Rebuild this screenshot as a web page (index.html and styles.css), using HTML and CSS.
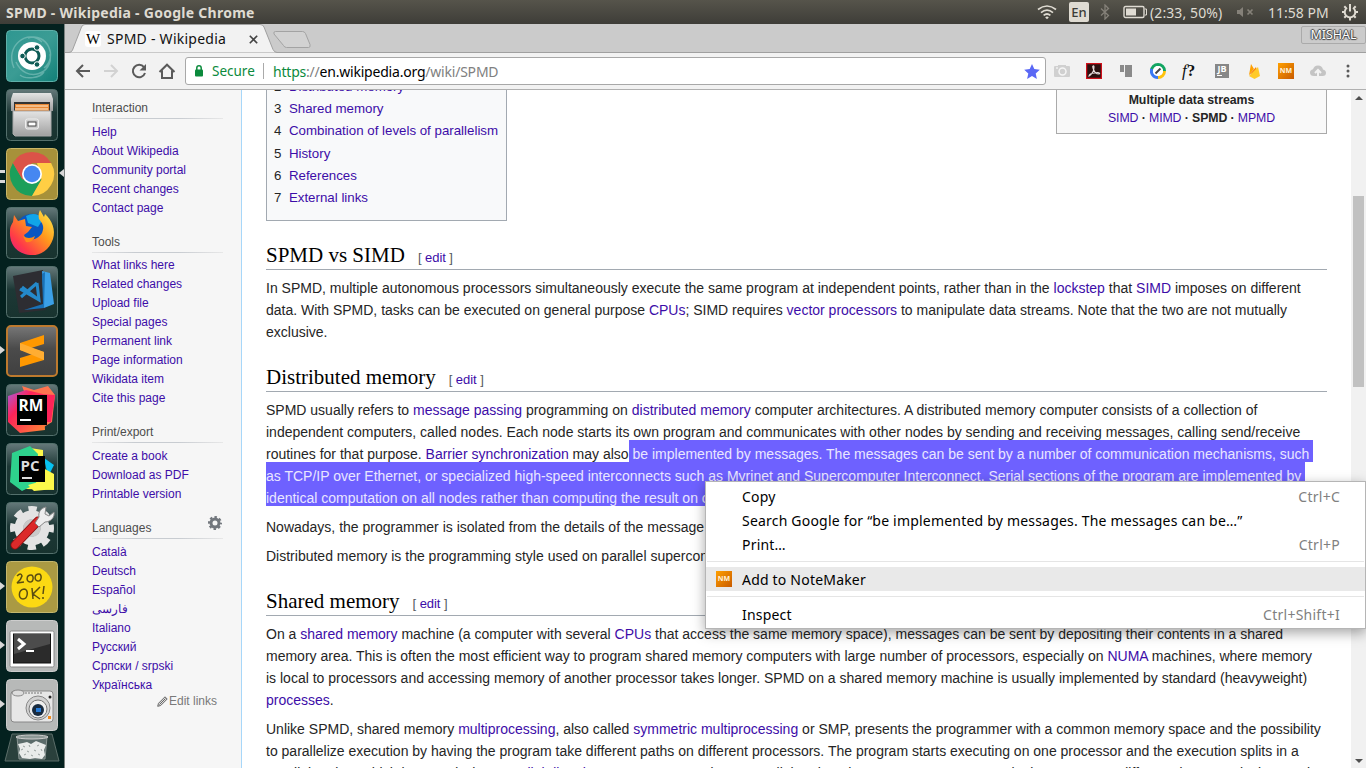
FILE: index.html
```html
<!DOCTYPE html>
<html lang="en">
<head>
<meta charset="utf-8">
<title>SPMD - Wikipedia</title>
<link rel="stylesheet" href="styles.css">
</head>
<body>
<svg width="0" height="0" class="defs">
  <defs>
    <linearGradient id="glass" x1="0" y1="0" x2="0" y2="1"><stop offset="0" stop-color="#65797a"/><stop offset=".45" stop-color="#1d3836"/><stop offset="1" stop-color="#18332f"/></linearGradient>
    <linearGradient id="silver" x1="0" y1="0" x2="0" y2="1"><stop offset="0" stop-color="#e4e4e4"/><stop offset="1" stop-color="#a0a0a0"/></linearGradient>
    <linearGradient id="teal" x1="0" y1="0" x2="1" y2="1"><stop offset="0" stop-color="#2f9791"/><stop offset=".5" stop-color="#3b9c94"/><stop offset="1" stop-color="#128078"/></linearGradient>
    <linearGradient id="fox" x1="1" y1="0" x2="0" y2="1"><stop offset="0" stop-color="#fff44f"/><stop offset=".4" stop-color="#ff9a1c"/><stop offset=".75" stop-color="#ff3b47"/><stop offset="1" stop-color="#e31587"/></linearGradient>
    <linearGradient id="dark" x1="0" y1="0" x2="0" y2="1"><stop offset="0" stop-color="#777"/><stop offset=".45" stop-color="#4b4b4b"/><stop offset="1" stop-color="#404040"/></linearGradient>
    <linearGradient id="rm" x1="0" y1="0" x2="1" y2="1"><stop offset="0" stop-color="#a55be0"/><stop offset=".35" stop-color="#ff2358"/><stop offset="1" stop-color="#ff8a35"/></linearGradient>
  </defs>
</svg>

<header class="panel">
  <span class="panel-title">SPMD - Wikipedia - Google Chrome</span>
  <div class="indicators">
    <svg class="wifi" width="20" height="16" viewBox="0 0 20 16" fill="none" stroke="#dfdbd2" stroke-width="1.7"><path d="M1 5.5Q10-1.5 19 5.5M4 8.6Q10 3.6 16 8.6M6.6 11.4Q10 8.6 13.4 11.4"/><path d="M8.2 13.4Q10 11.8 11.8 13.4L10 15.2z" fill="#dfdbd2" stroke="none"/></svg>
    <span class="lang">En</span>
    <svg class="bt" width="10" height="16" viewBox="0 0 10 16" fill="none" stroke="#858179" stroke-width="1.3"><path d="M1 4.5L8.5 11.5 5 15V1L8.5 4.5 1 11.5"/></svg>
    <svg class="battery" width="25" height="14" viewBox="0 0 25 14"><rect x="1" y="1.5" width="20" height="11" rx="1.5" fill="none" stroke="#dfdbd2" stroke-width="1.4"/><path d="M3 3.5h10v7H3z" fill="#dfdbd2"/><path d="M22 4h1.5v6H22" fill="none" stroke="#dfdbd2"/></svg>
    <span class="battery-text">(2:33, 50%)</span>
    <svg class="mute" width="18" height="12" viewBox="0 0 18 12"><path d="M1 4h2.5L7 1v10L3.500 8H1z" fill="#858179"/><path d="M11.500 3.500l5 5m0-5l-5 5" stroke="#858179" stroke-width="1.7"/></svg>
    <span class="clock">11:58 PM</span>
    <svg class="power" width="18" height="18" viewBox="0 0 18 18" fill="none" stroke="#dfdbd2"><path d="M6 4.800a5.300 5.300 0 1 0 6 0" stroke-width="2"/><path d="M9 1v7.500" stroke-width="2"/><path d="M1 9h2.500M14.500 9H17M3.300 14.700l1.700-1.700M13 13l1.700 1.700M9 15v2.500M3.300 3.300L5 5M13 5l1.700-1.700" stroke-width="2"/></svg>
  </div>
</header>

<div class="desktop">
  <nav class="launcher">
    <div class="app"><svg viewBox="0 0 52 52"><rect x=".5" y=".5" width="51" height="51" rx="4" fill="url(#teal)" stroke="#5fb0a9"/><path d="M8 38C-2 16 22-2 36 12M22 8C42 2 52 28 38 38M44 24C48 44 20 54 10 32M14 45C20 50 34 48 38 42" fill="none" stroke="#8fcac4" stroke-opacity=".55" stroke-width="1.500"/><circle cx="26" cy="26" r="14" fill="#fff"/><circle cx="26" cy="26" r="7" fill="none" stroke="#0e5b55" stroke-width="3"/><g fill="#0e5b55" stroke="#fff"><circle cx="16.500" cy="26" r="2.800"/><circle cx="31" cy="17.500" r="2.800"/><circle cx="31" cy="34.500" r="2.800"/></g></svg></div>
    <div class="app"><svg viewBox="0 0 52 52"><rect x=".5" y=".5" width="51" height="51" rx="4" fill="url(#glass)" stroke="#54706c"/><path d="M7 4h38l2 6v12H5V10z" fill="url(#silver)"/><path d="M8 13h36v10H8z" fill="#333"/><path d="M9 15h34v7H9z" fill="#e98734"/><path d="M10 17h32M9 20h33" stroke="#fff0d8"/><path d="M7 22h38v25H9l-2-2z" fill="url(#silver)" stroke="#aaa"/><rect x="19.500" y="30" width="13" height="10" rx="2" fill="#ccc" stroke="#eee"/><rect x="22" y="33" width="8" height="4" fill="#fff" stroke="#444"/></svg></div>
    <div class="app active running"><svg viewBox="0 0 52 52"><rect x=".5" y=".5" width="51" height="51" rx="4" fill="#a7913a" stroke="#c9b667"/><path d="M6.900 15A22 22 0 0 0 26 48L35.500 31.500 16.500 31.500z" fill="#1b9f5b"/><path d="M45.100 15A22 22 0 0 1 26 48L35.500 31.500 31 15z" fill="#ffce44"/><path d="M6.900 15A22 22 0 0 1 45.100 15H26L16.500 31.500z" fill="#db5348"/><circle cx="26" cy="26" r="10" fill="#fff"/><circle cx="26" cy="26" r="8.300" fill="#4687f1"/></svg></div>
    <div class="app"><svg viewBox="0 0 52 52"><rect x=".5" y=".5" width="51" height="51" rx="4" fill="url(#glass)" stroke="#54706c"/><circle cx="26" cy="24" r="17" fill="#0a56c0"/><path d="M20 9q10-5 17 3l-5 8-10-4z" fill="#11a5e8"/><path d="M8 8l4 6 7-2 1 7 6 1-4 5-4 3c2 8 14 5 18-2 3-7 0-10-3-14-1-4 0-7 1-9l4 7 1-3c7 6 11 16 8 25-4 12-14 17-23 16C12 47 3 38 4 24c0-5 2-7 3-9z" fill="url(#fox)"/><path d="M17 29q6 4 12 0-2 7-9 6z" fill="#ff8a19"/></svg></div>
    <div class="app"><svg viewBox="0 0 52 52"><rect x=".5" y=".5" width="51" height="51" rx="4" fill="url(#glass)" stroke="#54706c"/><path d="M7 10l30-6 3 40-27 3z" fill="#2d2d32"/><path d="M36 5l8 2 4 31-10 4z" fill="#3ba0e8"/><path d="M38 42l-20 2 19-6-1-30 3-2z" fill="#1971b7"/><path d="M31 17l2 17L14 23m1 8l16-14M33 34L16 21" fill="none" stroke="#2489ca" stroke-width="3"/></svg></div>
    <div class="app running one"><svg viewBox="0 0 52 52"><rect x="1" y="1" width="50" height="50" rx="4" fill="url(#dark)" stroke="#bd7a2e" stroke-width="2"/><path d="M14 18l24-8v9l-13 4 13 4v8L14 42v-9l13-4-13-4z" fill="#ff9800"/><path d="M14 18l24 9v8l-24-10z" fill="#ffad32"/></svg></div>
    <div class="app"><svg viewBox="0 0 52 52"><rect x=".5" y=".5" width="51" height="51" rx="4" fill="url(#glass)" stroke="#54706c"/><path d="M16 2l12 4 14-4 7 9-3 27-13 8z" fill="#ff744f"/><path d="M2 12l18-6 17 4 2 36-25 3L2 38z" fill="url(#rm)"/><path d="M32 10l17 1-4 27H30z" fill="#ff2358"/><rect x="11" y="11" width="30" height="30"/><text x="12.500" y="27" class="badge-text">RM</text><path d="M14 36h11" stroke="#fff" stroke-width="2"/></svg></div>
    <div class="app"><svg viewBox="0 0 52 52"><rect x=".5" y=".5" width="51" height="51" rx="4" fill="url(#glass)" stroke="#54706c"/><path d="M38 15l10 7-6 12z" fill="#07c3f2"/><path d="M24 5l13 2v18l11 6v16l-28-1z" fill="#fcf84a"/><path d="M6 10l18-7 8 8-2 30-14 7L4 39z" fill="#2ed28d"/><path d="M22 42l14-4 12-6v14l-20 2z" fill="#fcf84a"/><rect x="13" y="13" width="26" height="26"/><text x="14.500" y="28" class="badge-text small">PC</text><path d="M16 35h10" stroke="#ddd" stroke-width="2"/></svg></div>
    <div class="app"><svg viewBox="0 0 52 52"><rect x=".5" y=".5" width="51" height="51" rx="4" fill="url(#glass)" stroke="#54706c"/><circle cx="26" cy="26" r="18.500" fill="none" stroke="#e3e3e3" stroke-width="7" stroke-dasharray="8 6.530" stroke-dashoffset="4"/><circle cx="26" cy="26" r="13" fill="none" stroke="#e3e3e3" stroke-width="9"/><circle cx="26" cy="26" r="9" fill="#c9c9c9"/><path d="M9 43L32 19" stroke="#8f1010" stroke-width="9" stroke-linecap="round"/><path d="M9 43L32 19" stroke="#dc2a2a" stroke-width="7" stroke-linecap="round"/><path d="M29 21l4-6c-1-5 2-9 7-10l-1 7 4 2 5-4c1 5-3 10-9 10l-6 5z" fill="#eee" stroke="#888"/></svg></div>
    <div class="app running one"><svg viewBox="0 0 52 52"><rect x=".5" y=".5" width="51" height="51" rx="4" fill="#aa9a43" stroke="#c4b76d"/><circle cx="26" cy="26" r="20.500" fill="#fbd913"/><g fill="none" stroke="#5a4d12" stroke-width="1.500"><path d="M11 15q4-4 5 0-1 4-5 7l7-1M25 14c-5 0-5 7-1 7s4-7 1-7M33 13c-5 0-5 7-1 7s4-7 1-7M18 28c-6 1-6 10-1 10s6-10 1-10M26 27l1 11M34 26l-7 7 7 5M38 25l-1 8M37 36v2"/></g></svg></div>
    <div class="app running one"><svg viewBox="0 0 52 52"><rect x=".5" y=".5" width="51" height="51" rx="4" fill="#b7b9b8" stroke="#cdcdcd"/><rect x="4" y="11" width="44" height="36" rx="1.500" fill="#fff" stroke="#888"/><rect x="7.500" y="14" width="37" height="29" fill="#2b2b2b" stroke="#111"/><path d="M8 14h36v10L8 34z" fill="#4c4c4c"/><path d="M12 19l6 5-6 5" fill="none" stroke="#fff" stroke-width="3"/><path d="M20 31h8" stroke="#fff" stroke-width="2"/></svg></div>
    <div class="app running one"><svg viewBox="0 0 52 52"><rect x=".5" y=".5" width="51" height="51" rx="4" fill="#b7b9b8" stroke="#cdcdcd"/><rect x="5" y="12" width="42" height="31" rx="3" fill="#e7e7e7" stroke="#888"/><ellipse cx="12" cy="14" rx="6" ry="3" fill="#ddd" stroke="#888"/><path d="M19 14h17" stroke="#777" stroke-dasharray="2 1"/><circle cx="32" cy="29" r="12" fill="#d2d2d2" stroke="#888"/><circle cx="32" cy="30" r="9" fill="#eee" stroke="#777"/><circle cx="32" cy="31" r="6" fill="#182b40"/><rect x="30" y="29" width="5" height="4" fill="#277bd8"/><circle cx="44" cy="18" r="1.500" fill="#222"/><path d="M42 37h3v3h-3z" fill="#f08a1d"/></svg></div>
    <div class="trash"><svg viewBox="0 0 56 30"><path d="M8 1h40l7 27H1z" fill="#2a403c" stroke="#5b6d69"/><path d="M13 4h30l-2 22H15z" fill="#a6b0ae" fill-opacity=".4" stroke="#8a9593"/><ellipse cx="28" cy="4" rx="16" ry="2" fill="#8d9996" stroke="#ccc"/><path d="M14 11l5-1 4-1 4 2 5-3 5 2 5 2-2 5 1 5-3 4-7-1-5 1-8-1-3-5 1-4z" fill="#e9ecea"/><path d="M19 13l2 1M25 12l1 2M33 13l2-1M17 17l2-1M23 18l2 1M30 17l2 1M37 16l1 2M20 22l2-1M27 22l2 1M34 21l2 1" stroke="#98a19e" fill="none"/></svg></div>
  </nav>

  <main class="browser">
    <div class="tabstrip">
      <svg class="tab-shape" width="250" height="29" viewBox="0 0 250 29"><path d="M0 28.500H4Q6.500 28.500 7.500 26L16.500 3Q17.500 .5 20 .5H195Q198 .5 199 3L208 25.500Q209.500 28.500 212 28.500H250V29H0z" fill="#f2f2f2" stroke="#a0a0a0"/><path d="M210.500 7.500h27q2 0 3 2l4.500 11q.8 3-1.500 3h-22q-2 0-3-2L209 10q-.8-2.500 1.500-2.500z" fill="#d2d2d2" stroke="#a3a3a3"/></svg>
      <div class="tab">
        <span class="favicon">W</span>
        <span class="tab-title">SPMD - Wikipedia</span>
        <svg class="close" width="9" height="9" viewBox="0 0 9 9" stroke="#444" stroke-width="1.600"><path d="M.8.8l7.400 7.400M8.200.8L.8 8.200"/></svg>
      </div>
      <span class="profile">MISHAL</span>
    </div>

    <div class="toolbar">
      <div class="nav-buttons">
        <svg width="16" height="16" viewBox="0 0 16 16" fill="none" stroke="#5a5a5a" stroke-width="2"><path d="M15 8H2.500M8 2L2 8l6 6"/></svg>
        <svg width="16" height="16" viewBox="0 0 16 16" fill="none" stroke="#d2d2d2" stroke-width="2"><path d="M1 8h12.500M8 2l6 6-6 6"/></svg>
        <svg width="16" height="16" viewBox="0 0 16 16" fill="none" stroke="#5a5a5a" stroke-width="2"><path d="M13 4.200A6.200 6.200 0 1 0 14 10"/><path d="M15 1v6.500H8.500z" fill="#5a5a5a" stroke="none"/></svg>
        <svg class="home" width="18" height="16" viewBox="0 0 18 16" fill="none" stroke="#5a5a5a" stroke-width="2"><path d="M1.500 9L9 1.700 16.500 9M4 7.500V15h10V7.500"/></svg>
      </div>
      <div class="omnibox">
        <svg width="10" height="12" viewBox="0 0 10 12"><rect x="1" y="4.500" width="8" height="7" rx="1" fill="#0b8a3c"/><path d="M2.800 5V3a2.200 2.200 0 0 1 4.400 0v2" fill="none" stroke="#0b8a3c" stroke-width="1.500"/></svg>
        <span class="secure">Secure</span>
        <span class="url"><span class="scheme">https</span>://<span class="host">en.wikipedia.org</span>/wiki/SPMD</span>
        <svg class="star" width="16" height="15" viewBox="0 0 16 15"><path d="M8 0l2.300 5.100 5.500.6-4.100 3.700 1.200 5.500L8 12.100l-4.900 2.800 1.200-5.500L.2 5.700l5.500-.6z" fill="#5a68f5"/></svg>
      </div>
      <div class="extensions">
        <svg width="16" height="16" viewBox="0 0 16 16"><path d="M1 3h3V2h8v1h3q1 0 1 1v9q0 1-1 1H1q-1 0-1-1V4q0-1 1-1z" fill="#d0d0d0"/><circle cx="8.500" cy="8.500" r="3.500" fill="none" stroke="#f5f5f5" stroke-width="1.500"/><path d="M2 5h2" stroke="#fff"/></svg>
        <svg width="16" height="16" viewBox="0 0 16 16"><rect x=".6" y=".6" width="14.800" height="14.800" fill="#2a1111" stroke="#d0101b" stroke-width="1.300"/><path d="M3 13c3-2 5-6 5-9 0-2-2-1-1 1 1 4 3 6 6 6 2-1-1-2-4-1-3 0-6 1-6 3z" fill="none" stroke="#e8dede" stroke-width="1.100"/></svg>
        <svg width="16" height="16" viewBox="0 0 16 16" fill="#8a8a8a"><path d="M2 2h4v7H2z"/><path d="M7 2h7v12H7z"/></svg>
        <svg width="16" height="16" viewBox="0 0 16 16" fill="none" stroke-width="3"><path d="M1.500 8a6.500 6.500 0 0 1 13 0" stroke="#12a562"/><path d="M14.500 8A6.500 6.500 0 0 1 8 14.500" stroke="#ffc20d"/><path d="M8 14.500A6.500 6.500 0 0 1 1.700 6" stroke="#3978f4"/><circle cx="8" cy="8" r="5" fill="#fff" stroke="none"/><path d="M5.500 10.500l5-5" stroke="#444" stroke-width="2"/></svg>
        <span class="whatfont"><i>f</i>?</span>
        <span class="jb">JB</span>
        <svg width="16" height="16" viewBox="0 0 16 16"><path d="M3 12L5 1l3 5z" fill="#ffa000"/><path d="M3 12l7-8 1 4z" fill="#f6820c"/><path d="M3 13l9-9 2 9-5.500 3z" fill="#ffca28"/></svg>
        <span class="nm">NM</span>
        <svg width="16" height="16" viewBox="0 0 16 16"><path d="M4 13Q0 13 0 9.500 0 7 3 6.300 4 2.500 8 2.500q4 0 5 4 3 .8 3 3.300Q16 13 12.500 13z" fill="#c4c4c4"/><path d="M8 15V8M5 10l3-3 3 3" fill="none" stroke="#f2f2f2" stroke-width="2"/></svg>
        <svg class="more" width="4" height="14" viewBox="0 0 4 14" fill="#5a5a5a"><circle cx="2" cy="2" r="1.500"/><circle cx="2" cy="7" r="1.500"/><circle cx="2" cy="12" r="1.500"/></svg>
      </div>
    </div>

    <div class="viewport">
      <aside class="sidebar">
        <section><h3>Interaction</h3><ul><li>Help</li><li>About Wikipedia</li><li>Community portal</li><li>Recent changes</li><li>Contact page</li></ul></section>
        <section class="tools"><h3>Tools</h3><ul><li>What links here</li><li>Related changes</li><li>Upload file</li><li>Special pages</li><li>Permanent link</li><li>Page information</li><li>Wikidata item</li><li>Cite this page</li></ul></section>
        <section><h3>Print/export</h3><ul><li>Create a book</li><li>Download as PDF</li><li>Printable version</li></ul></section>
        <section><h3>Languages <svg class="gear" width="14" height="14" viewBox="0 0 14 14" fill="none" stroke="#72777d"><circle cx="7" cy="7" r="4" stroke-width="3"/><circle cx="7" cy="7" r="6" stroke-width="2" stroke-dasharray="2.500 2.212" stroke-dashoffset="1.250"/></svg></h3><ul><li>Català</li><li>Deutsch</li><li>Español</li><li>فارسی</li><li>Italiano</li><li>Русский</li><li>Српски / srpski</li><li>Українська</li></ul>
          <div class="edit-links"><svg width="11" height="11" viewBox="0 0 11 11"><path d="M.7 10.300l.8-3L8 .8l2.200 2.200L3.700 9.500zM2.500 8.500l6-6" fill="#ddd" stroke="#666"/></svg>Edit links</div></section>
      </aside>

      <article class="content">
        <div class="top-row">
          <ol class="toc"><li><b>2</b><a>Distributed memory</a></li><li><b>3</b><a>Shared memory</a></li><li><b>4</b><a>Combination of levels of parallelism</a></li><li><b>5</b><a>History</a></li><li><b>6</b><a>References</a></li><li><b>7</b><a>External links</a></li></ol>
          <div class="navbox"><strong>Multiple data streams</strong><div><a>SIMD</a> <b>·</b> <a>MIMD</a> <b>·</b> <b>SPMD</b> <b>·</b> <a>MPMD</a></div></div>
        </div>

        <h2>SPMD vs SIMD<span class="edit">[ <a>edit</a> ]</span></h2>
        <p>In SPMD, multiple autonomous processors simultaneously execute the same program at independent points, rather than in the <a>lockstep</a> that <a>SIMD</a> imposes on different<br>data. With SPMD, tasks can be executed on general purpose <a>CPUs</a>; SIMD requires <a>vector processors</a> to manipulate data streams. Note that the two are not mutually<br>exclusive.</p>

        <h2>Distributed memory<span class="edit">[ <a>edit</a> ]</span></h2>
        <p>SPMD usually refers to <a>message passing</a> programming on <a>distributed memory</a> computer architectures. A distributed memory computer consists of a collection of<br>independent computers, called nodes. Each node starts its own program and communicates with other nodes by sending and receiving messages, calling send/receive<br>routines for that purpose. <a>Barrier synchronization</a> may also<span class="selected"> be implemented by messages. The messages can be sent by a number of communication mechanisms, such&nbsp;<br>as TCP/IP over Ethernet, or specialized high-speed interconnects such as Myrinet and Supercomputer Interconnect. Serial sections of the program are implemented by&nbsp;<br>identical computation on all nodes rather than computing the result on one</span></p>
        <p>Nowadays, the programmer is isolated from the details of the message</p>
        <p>Distributed memory is the programming style used on parallel supercomp</p>

        <h2>Shared memory<span class="edit">[ <a>edit</a> ]</span></h2>
        <p>On a <a>shared memory</a> machine (a computer with several <a>CPUs</a> that access the same memory space), messages can be sent by depositing their contents in a shared<br>memory area. This is often the most efficient way to program shared memory computers with large number of processors, especially on <a>NUMA</a> machines, where memory<br>is local to processors and accessing memory of another processor takes longer. SPMD on a shared memory machine is usually implemented by standard (heavyweight)<br><a>processes</a>.</p>
        <p>Unlike SPMD, shared memory <a>multiprocessing</a>, also called <a>symmetric multiprocessing</a> or SMP, presents the programmer with a common memory space and the possibility<br>to parallelize execution by having the program take different paths on different processors. The program starts executing on one processor and the execution splits in a<br>parallel region, which is started when <a>parallel directives</a> are encountered. In a parallel region, the processors execute a single program on different data. A typical example</p>
      </article>

      <div class="scrollbar"><i class="up"></i><i class="thumb"></i><i class="down"></i></div>
    </div>
  </main>
</div>

<div class="menu">
  <div class="item"><span>Copy</span><kbd>Ctrl+C</kbd></div>
  <div class="item"><span>Search Google for “be implemented by messages. The messages can be…”</span></div>
  <div class="item"><span>Print…</span><kbd>Ctrl+P</kbd></div>
  <hr>
  <div class="item hover"><span class="nm">NM</span><span>Add to NoteMaker</span></div>
  <hr class="second">
  <div class="item"><span>Inspect</span><kbd>Ctrl+Shift+I</kbd></div>
</div>
</body>
</html>
```
FILE: styles.css
```css
* { box-sizing: border-box; }
body {
  margin: 0;
  width: 1366px;
  height: 768px;
  overflow: hidden;
  display: flex;
  flex-direction: column;
  position: relative;
  background: #04211f;
  font-family: "Noto Sans", "Open Sans", sans-serif;
}
svg { display: block; flex: none; }
.defs { position: absolute; }

/* Top panel */
.panel {
  height: 24px;
  flex: none;
  display: flex;
  align-items: center;
  justify-content: space-between;
  padding: 0 7px 0 6px;
  color: #dfdbd2;
  background: linear-gradient(#56544b, #3e3d38);
  white-space: nowrap;
}
.panel-title { font-size: 14px; font-weight: 700; letter-spacing: .27px; }
.indicators { display: flex; align-items: center; font-size: 14px; }
.lang {
  width: 20px;
  height: 20px;
  margin: 0 11px 0 12px;
  border-radius: 2px;
  background: #dfdbd2;
  color: #3c3b37;
  font-size: 13px;
  font-weight: 500;
  line-height: 20px;
  text-align: center;
}
.battery { margin-left: 13px; }
.battery-text { margin-left: 2px; width: 74px; letter-spacing: .1px; }
.mute { margin-left: 12px; }
.clock { margin-left: 14px; width: 62px; }
.power { margin-left: 11px; }

.desktop { flex: 1; min-height: 0; display: flex; }

/* Launcher */
.launcher {
  width: 65px;
  flex: none;
  padding: 6px 0 0 6px;
  background: #04211f;
  border-right: 1px solid #7b8280;
  overflow: hidden;
}
.app { width: 52px; height: 52px; margin-bottom: 7px; position: relative; }
.app.running::before {
  content: "";
  position: absolute;
  left: -6px;
  top: 22px;
  width: 5px;
  height: 7px;
  border-top: 3px solid #d8d8d8;
  border-bottom: 3px solid #d8d8d8;
}
.app.one::before {
  top: 21px;
  width: 0;
  height: 0;
  border: 4px solid transparent;
  border-left: 5px solid #d8d8d8;
  border-right: 0;
}
.app.active::after {
  content: "";
  position: absolute;
  right: -6px;
  top: 21px;
  border: 4px solid transparent;
  border-right: 5px solid #d8d8d8;
  border-left: 0;
}
.badge-text { font: 700 15.500px "Open Sans", sans-serif; fill: #fff; }
.badge-text.small { font-size: 15px; fill: #ddd; }
.trash { width: 56px; height: 30px; margin: -5px 0 0 -2px; }

/* Browser chrome */
.browser { flex: 1; min-width: 0; display: flex; flex-direction: column; background: #f2f2f2; }
.tabstrip {
  height: 29px;
  flex: none;
  position: relative;
  display: flex;
  justify-content: space-between;
  background: linear-gradient(#cbcbcb 28px, #a0a0a0 28px);
}
.tab-shape { position: absolute; left: 0; top: 0; }
.tab { position: relative; display: flex; align-items: center; padding: 1px 0 0 20px; }
.favicon {
  width: 16px;
  height: 16px;
  border-radius: 3px;
  background: #fff;
  color: #000;
  font: 15px/16px "Liberation Serif", serif;
  text-align: center;
}
.tab-title { width: 121px; margin: -2px 21px 0 6px; font-size: 14px; letter-spacing: .25px; white-space: nowrap; color: #111; }
.profile {
  width: 65px;
  height: 18px;
  margin-top: 2px;
  border: 1px solid #aaa;
  border-radius: 2px;
  color: #fff;
  font-size: 12.500px;
  line-height: 16px;
  text-align: center;
  text-shadow: 1px 0 1px #444, -1px 0 1px #444, 0 1px 1px #444, 0 -1px 1px #444;
}
.toolbar {
  height: 37px;
  flex: none;
  display: flex;
  align-items: center;
  border-bottom: 1px solid #b0b0b0;
}
.nav-buttons { width: 120px; display: flex; gap: 12px; padding-left: 10px; }
.home { margin-left: -1px; }
.omnibox {
  width: 861px;
  height: 28px;
  display: flex;
  align-items: center;
  padding-left: 8px;
  border: 1px solid #a8a8a8;
  border-radius: 3px;
  background: #fff;
  font-size: 14px;
  white-space: nowrap;
}
.secure {
  width: 52px;
  margin: 0 9px 0 8px;
  border-right: 1px solid #aaa;
  color: #0b8a3c;
  font-size: 13.500px;
  line-height: 16px;
}
.url { color: #808080; letter-spacing: -.21px; }
.scheme { color: #0b8a3c; }
.host { color: #000; }
.star { margin: 0 5px 0 auto; }
.extensions { display: flex; align-items: center; gap: 16px; padding-left: 8px; }
.whatfont { width: 16px; font: 700 17px/16px "Liberation Serif", serif; color: #111; white-space: nowrap; }
.whatfont i { font-weight: 400; }
.jb {
  width: 14px;
  height: 14px;
  margin: 0 1px;
  background: linear-gradient(#fff, #fff) 2px 11px / 5px 1px no-repeat #878787;
  color: #fff;
  font: 700 9px/10px "Open Sans", sans-serif;
  text-align: center;
}
.nm {
  width: 16px;
  height: 16px;
  flex: none;
  background: linear-gradient(135deg, #ffa000, #c85a00);
  color: #fff3dc;
  font: 700 7px/16px "Open Sans", sans-serif;
  text-align: center;
}
.more { margin-left: 4px; }

/* Page */
.viewport { flex: 1; min-height: 0; display: flex; overflow: hidden; background: #fff; font-family: "Liberation Sans", Arial, sans-serif; }
.sidebar {
  width: 177px;
  flex: none;
  padding: 9px 18px 0 27px;
  border-right: 1px solid #a7d7f9;
  background: #f6f6f6;
  color: #4d4d4d;
  font-size: 12px;
  line-height: 19px;
}
.sidebar section { margin-bottom: 15px; }
.sidebar h3 {
  height: 20px;
  margin: 0 0 4px;
  display: flex;
  justify-content: space-between;
  border-bottom: 1px solid;
  border-image: linear-gradient(90deg, #e8e8e8, #c8ccd1 33%, #c8ccd1 66%, #e8e8e8) 1;
  font-size: 12px;
  font-weight: 400;
}
.sidebar .tools h3 { margin-bottom: 3px; }
.sidebar ul { margin: 0; padding: 0; list-style: none; color: #3d0da8; }
.sidebar li { height: 19px; }
.gear { margin-top: -3px; margin-right: 1px; }
.edit-links { display: flex; align-items: center; justify-content: flex-end; height: 13px; gap: 1px; padding-right: 6px; color: #797979; }
.content { width: 1061px; flex: none; margin: 0 24px; color: #252525; font-size: 14px; line-height: 22px; white-space: nowrap; }
.content a { color: #3d0da8; }
.top-row { height: 131px; display: flex; justify-content: space-between; align-items: flex-start; }
.toc {
  width: 241px;
  height: 131px;
  margin: 0;
  padding: 0 7px 10.400px;
  display: flex;
  flex-direction: column;
  justify-content: flex-end;
  overflow: hidden;
  list-style: none;
  border: 1px solid #a2a9b1;
  border-top: 0;
  background: #f8f9fa;
  font-size: 13.300px;
}
.toc li { flex: none; height: 22.300px; line-height: 22.300px; display: flex; gap: 7.500px; }
.toc b { font-weight: 400; }
.navbox {
  width: 271px;
  height: 44px;
  border: 1px solid #aaa;
  border-top: 0;
  background: #f9f9f9;
  font-size: 12.300px;
  line-height: 18px;
  text-align: center;
}
.navbox strong { display: block; margin-top: 1px; }
.navbox div { letter-spacing: -.1px; }
.content h2 {
  height: 49px;
  margin: 0 0 7px;
  padding-top: 20px;
  border-bottom: 1px solid #a2a9b1;
  color: #000;
  font: 400 21px/28px "Liberation Serif", serif;
}
.edit { margin-left: 13px; color: #54595d; font: 13px "Liberation Sans", sans-serif; letter-spacing: -.05px; }
.content p { margin: 0 0 7px; }
.content p + h2 { margin-top: -7px; }
.selected { padding: 6px 0 0; background: #6e61ff; color: #e9e6ff; }
.scrollbar {
  flex: 1;
  display: flex;
  flex-direction: column;
  align-items: center;
  background: #f1f1f1;
}
.up, .down { border: 4px solid transparent; }
.up { margin-top: 6px; border-bottom-color: #505050; border-top-width: 0; }
.down { margin: auto 0 5px; border-top-color: #505050; border-bottom-width: 0; }
.thumb { width: 11px; height: 191px; margin-top: 96px; background: #c1c1c1; }

/* Context menu */
.menu {
  position: absolute;
  left: 705px;
  top: 481px;
  width: 661px;
  height: 148px;
  padding: 3px 0;
  border: 1px solid #b5b5b5;
  background: #fff;
  color: #000;
  font-size: 14px;
  letter-spacing: .2px;
  box-shadow: 0 4px 12px rgba(0, 0, 0, .35);
}
.item { height: 24px; display: flex; align-items: center; padding: 0 25px 2px 36px; white-space: nowrap; }
.item kbd { margin-left: auto; color: #808080; font: inherit; letter-spacing: .25px; }
.item.hover { background: #e9e9e9; padding: 0 0 0 10px; }
.item .nm { margin-right: 10px; letter-spacing: 0; }
.menu hr { height: 1px; margin: 4px 1px 5px; border: 0; background: #e5e5e5; }
.menu .second { margin-top: 5px; }
.menu hr + .item:last-child { margin-top: 6px; }
```
